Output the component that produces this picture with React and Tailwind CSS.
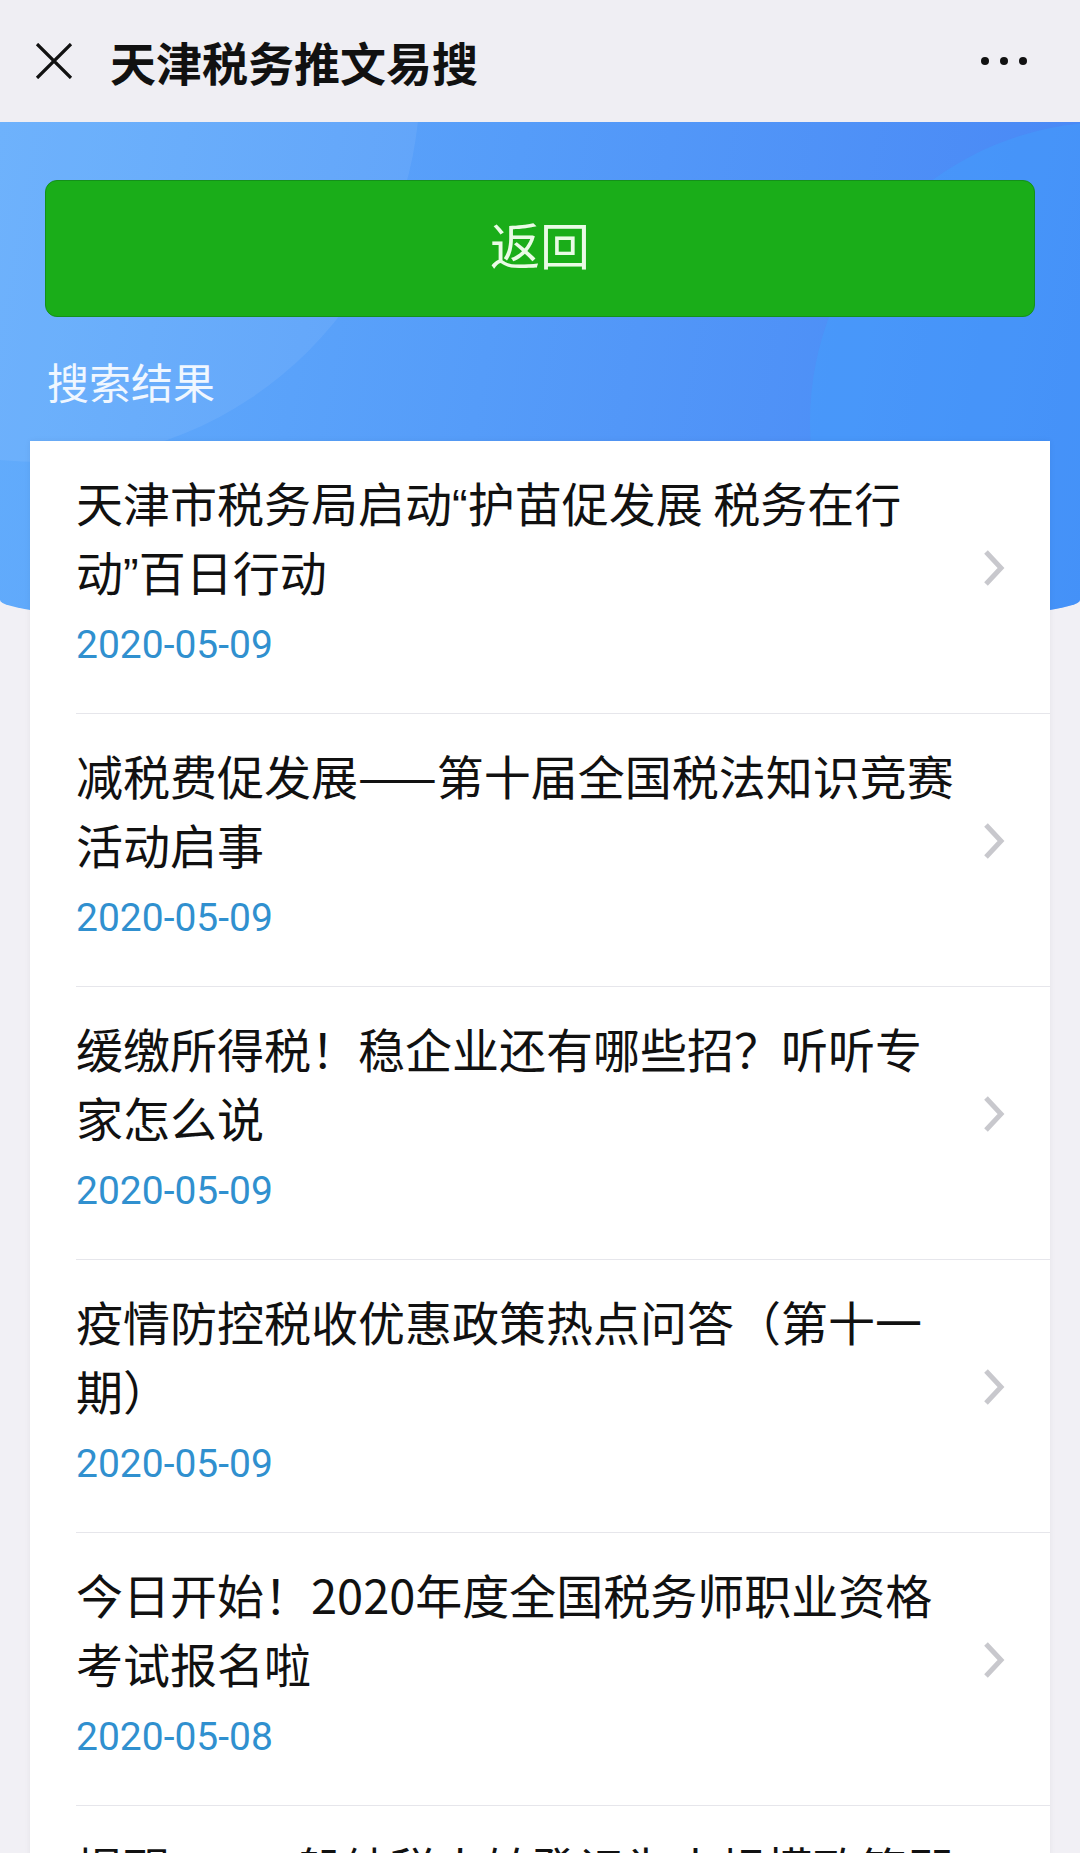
import React from "react";

const Q = ({ c }) => (
  <span style={{ fontFamily: '"Liberation Sans", Arial, sans-serif' }}>{c}</span>
);

const items = [
  {
    lines: [
      <>天津市税务局启动<Q c="“" />护苗促发展 税务在行</>,
      <>动<Q c="”" />百日行动</>,
    ],
    date: "2020-05-09",
  },
  { lines: ["减税费促发展——第十届全国税法知识竞赛", "活动启事"], date: "2020-05-09" },
  { lines: ["缓缴所得税！稳企业还有哪些招？听听专", "家怎么说"], date: "2020-05-09" },
  { lines: ["疫情防控税收优惠政策热点问答（第十一", "期）"], date: "2020-05-09" },
  { lines: ["今日开始！2020年度全国税务师职业资格", "考试报名啦"], date: "2020-05-08" },
  { lines: ["提醒——一般纳税人转登记为小规模政策即", "将到期"], date: "2020-05-08" },
];

const cjk = { fontFamily: '"Noto Sans CJK SC", "Noto Sans", sans-serif' };

function Chevron() {
  return (
    <svg width="22" height="36" viewBox="0 0 22 36" className="shrink-0">
      <path d="M3 2 L18 18 L3 34" fill="none" stroke="#c8c8cd" strokeWidth="5" strokeLinejoin="miter" />
    </svg>
  );
}

export default function App() {
  return (
    <div className="min-h-screen bg-[#f1f0f5] overflow-hidden" style={cjk}>
      {/* Header */}
      <div className="h-[122px] bg-[#efeef3] flex items-center pl-[35px] pr-[53px]">
        <svg width="38" height="36" viewBox="0 0 38 36">
          <path d="M2 1 L36 35 M36 1 L2 35" stroke="#111" strokeWidth="3.2" fill="none" />
        </svg>
        <div className="ml-[37px] text-[46px] leading-[56px] font-bold text-[#111] flex-1">天津税务推文易搜</div>
        <div className="flex items-center gap-[11px]">
          <span className="block w-[8px] h-[8px] rounded-full bg-[#111]" />
          <span className="block w-[8px] h-[8px] rounded-full bg-[#111]" />
          <span className="block w-[8px] h-[8px] rounded-full bg-[#111]" />
        </div>
      </div>

      {/* Blue area */}
      <div className="relative h-[508px] overflow-hidden rounded-b-[50%_30px] bg-[linear-gradient(100deg,#63adfc_0%,#559cf9_45%,#4886f5_100%)] pt-[58px]">
        <svg className="absolute inset-0 w-full h-full" viewBox="0 0 1080 508" preserveAspectRatio="none">
          <circle cx="40" cy="-40" r="380" fill="#ffffff" fillOpacity="0.07" />
          <circle cx="1110" cy="300" r="300" fill="#3fa6ff" fillOpacity="0.35" />
        </svg>
        <div className="relative mx-[45px] h-[137px] rounded-[12px] bg-[#1aad19] border border-[#14901a] flex items-center justify-center pb-[12px]">
          <span className="text-[50px] leading-[60px] text-[#eafbe6]">返回</span>
        </div>
        <div className="relative mt-[40px] pl-[47px] text-[42px] leading-[48px] text-white/90">搜索结果</div>
      </div>

      {/* Card */}
      <div className="relative -mt-[189px] mx-[30px] bg-white shadow-[0_0_6px_rgba(0,0,0,0.06)]">
        {items.map((it, i) => (
          <div key={i} className="pl-[46px]">
            <div className="flex items-center border-b border-[#e6e6eb] pr-[45px] pt-[26px] pb-[44px]">
              <div className="flex-1 min-w-0">
                <div className="text-[47px] text-[#111] whitespace-nowrap">
                  <div className="h-[69px] leading-[69px] overflow-visible">{it.lines[0]}</div>
                  <div className="h-[69px] leading-[69px] overflow-visible">{it.lines[1]}</div>
                </div>
                <div
                  className="mt-[16px] h-[48px] text-[39px] leading-[48px] text-[#3090cf]"
                  style={{ fontFamily: 'Roboto, "Liberation Sans", sans-serif' }}
                >
                  {it.date}
                </div>
              </div>
              <Chevron />
            </div>
          </div>
        ))}
      </div>
    </div>
  );
}
